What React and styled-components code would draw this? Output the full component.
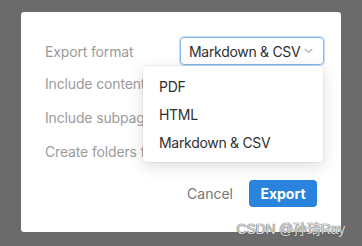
import React from "react";
import styled, { createGlobalStyle } from "styled-components";

const Global = createGlobalStyle`
  html, body { margin: 0; padding: 0; }
  body {
    background: #6b6b6b;
    font-family: Inter, "Noto Sans", "Noto Sans CJK SC", sans-serif;
    width: 362px;
    height: 246px;
    overflow: hidden;
  }
`;

const Stage = styled.div`
  position: relative;
  width: 362px;
  height: 246px;
  padding: 12px 21px 14px 21px;
  box-sizing: border-box;
`;

const Dialog = styled.div`
  width: 320px;
  height: 220px;
  box-sizing: border-box;
  background: #ffffff;
  border-radius: 3px;
  padding: 25px 17px 25px 24px;
  display: flex;
  flex-direction: column;
`;

const Rows = styled.div`
  display: flex;
  flex-direction: column;
`;

const Row = styled.div`
  display: flex;
  align-items: center;
  justify-content: space-between;
  height: ${(p) => (p.$first ? "28px" : "32px")};
  padding-top: ${(p) => (p.$first ? "0" : "2px")};
`;

const Label = styled.span`
  font-size: 14px;
  letter-spacing: -0.15px;
  color: #9b9b9b;
  white-space: nowrap;
`;

const SelectWrap = styled.div`
  position: relative;
`;

const Select = styled.div`
  width: 144px;
  height: 28px;
  box-sizing: border-box;
  border: 1px solid #86b9ef;
  box-shadow: 0 0 0 1px #c6dcf6;
  border-radius: 4px;
  display: flex;
  align-items: center;
  justify-content: space-between;
  padding: 0 10px 0 8px;
  font-size: 14px;
  letter-spacing: -0.3px;
  color: #2f2f2f;
`;

const Menu = styled.div`
  position: absolute;
  right: 1px;
  top: 29px;
  width: 180px;
  box-sizing: border-box;
  background: #ffffff;
  border-radius: 4px;
  padding: 6px 0;
  box-shadow: 0 4px 16px rgba(0, 0, 0, 0.14), 0 0 0 1px rgba(0, 0, 0, 0.04);
  z-index: 2;
`;

const Item = styled.div`
  height: 28px;
  display: flex;
  align-items: center;
  padding-left: 16px;
  font-size: 14px;
  letter-spacing: -0.3px;
  color: #2f2f2f;
  white-space: nowrap;
`;

const Footer = styled.div`
  margin-top: auto;
  display: flex;
  justify-content: flex-end;
  align-items: center;
  gap: 16px;
  padding-right: 7px;
`;

const Cancel = styled.span`
  font-size: 14px;
  color: #777777;
`;

const Primary = styled.div`
  width: 68px;
  height: 27px;
  border-radius: 4px;
  background: #2a84dd;
  color: #ffffff;
  font-size: 14px;
  font-weight: 700;
  display: flex;
  align-items: center;
  justify-content: center;
`;

const Watermark = styled.div`
  position: absolute;
  right: 17px;
  bottom: 8px;
  font-family: "Liberation Sans", "Noto Sans CJK SC", sans-serif;
  font-size: 14px;
  color: rgba(235, 235, 235, 0.9);
  text-shadow: 0 0 1px #555, 0 0 1px #555;
  letter-spacing: -0.2px;
`;

const Chevron = () => (
  <svg width="9" height="6" viewBox="0 0 9 6" fill="none">
    <path d="M0.8 1l3.7 3.6L8.2 1" stroke="#a8a8a8" strokeWidth="1.1" />
  </svg>
);

export default function App() {
  return (
    <Stage>
      <Global />
      <Dialog>
        <Rows>
          <Row $first>
            <Label>Export format</Label>
            <SelectWrap>
              <Select>
                <span>Markdown &amp; CSV</span>
                <Chevron />
              </Select>
              <Menu>
                <Item>PDF</Item>
                <Item>HTML</Item>
                <Item>Markdown &amp; CSV</Item>
              </Menu>
            </SelectWrap>
          </Row>
          <Row>
            <Label>Include content</Label>
          </Row>
          <Row>
            <Label>Include subpages</Label>
          </Row>
          <Row>
            <Label>Create folders for subpages</Label>
          </Row>
        </Rows>
        <Footer>
          <Cancel>Cancel</Cancel>
          <Primary>Export</Primary>
        </Footer>
      </Dialog>
      <Watermark>CSDN @孙琦Ray</Watermark>
    </Stage>
  );
}
